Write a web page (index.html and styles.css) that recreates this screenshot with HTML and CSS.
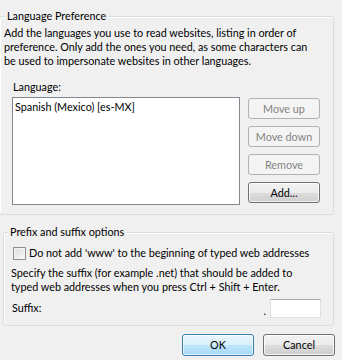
FILE: index.html
```html
<!DOCTYPE html>
<html>
<head>
<meta charset="utf-8">
<link rel="stylesheet" href="styles.css">
</head>
<body>
<div class="dialog">
  <fieldset class="group group-lang">
    <legend class="legend legend-lang">Language Preference</legend>
    <p class="intro">Add the languages you use to read websites, listing in order of preference. Only add the ones you need, as some characters can be used to impersonate websites in other languages.</p>
    <div class="field-label">Language:</div>
    <div class="lang-row">
      <div class="listbox">
        <div class="list-item">Spanish (Mexico) [es-MX]</div>
      </div>
      <div class="side-buttons">
        <button class="btn btn-disabled" disabled>Move up</button>
        <button class="btn btn-disabled" disabled>Move down</button>
        <button class="btn btn-disabled" disabled>Remove</button>
        <button class="btn">Add...</button>
      </div>
    </div>
  </fieldset>
  <fieldset class="group group-prefix">
    <legend class="legend legend-prefix">Prefix and suffix options</legend>
    <label class="check-row"><span class="checkbox"></span><span>Do not add 'www' to the beginning of typed web addresses</span></label>
    <p class="desc">Specify the suffix (for example .net) that should be added to typed web addresses when you press Ctrl + Shift + Enter.</p>
    <div class="suffix-row">
      <span>Suffix:</span>
      <span class="suffix-input-wrap"><span class="dot">.</span><span class="textbox"></span></span>
    </div>
  </fieldset>
  <div class="footer">
    <button class="btn btn-default">OK</button>
    <button class="btn">Cancel</button>
  </div>
</div>
</body>
</html>
```
FILE: styles.css
```css
html, body {
  margin: 0;
  padding: 0;
  background: #f0f0f0;
}
body {
  font-family: Lato, "Open Sans", "DejaVu Sans", sans-serif;
  font-size: 10.8px;
  line-height: 14px;
  color: #000;
  width: 342px;
  height: 360px;
  overflow: hidden;
}
.dialog {
  display: flex;
  flex-direction: column;
}
.group {
  border: 1px solid #d5dfe5;
  border-radius: 3px;
  box-shadow: inset 1px 1px 0 #fff;
  min-width: 0;
}
.legend {
  padding: 0 2px;
  line-height: 14px;
  background: #f0f0f0;
}
.group-lang {
  margin: 9px 8px 0 -1px;
  padding: 3px 12px 9px 4px;
}
.legend-lang {
  margin-left: 1px;
}
.intro {
  margin: 0;
}
.field-label {
  margin: 12px 0 0 9px;
}
.lang-row {
  display: flex;
  margin-top: 3px;
  margin-left: 8px;
}
.listbox {
  width: 226px;
  height: 106px;
  border: 1px solid #828790;
  background: #fff;
}
.list-item {
  padding: 2px 0 0 2px;
}
.side-buttons {
  display: flex;
  flex-direction: column;
  gap: 7px;
  margin-left: 8px;
  margin-top: 1px;
}
.btn {
  width: 72px;
  height: 21px;
  padding: 0;
  font: inherit;
  line-height: 14px;
  color: #000;
  border: 1px solid #707070;
  border-radius: 3px;
  background: linear-gradient(#f2f2f2 0%, #ebebeb 50%, #dddddd 50%, #cfcfcf 100%);
  box-shadow: inset 0 0 0 1px rgba(255,255,255,0.75);
}
.btn-disabled {
  border-color: #adb2b5;
  background: #f4f4f4;
  color: #838383;
  box-shadow: none;
}
.group-prefix {
  margin: 10px 8px 0 3px;
  padding: 7px 12px 7px 7px;
}
.legend-prefix {
  margin-left: -3px;
}
.check-row {
  display: flex;
  align-items: center;
  height: 14px;
  white-space: nowrap;
}
.checkbox {
  flex: none;
  width: 11px;
  height: 11px;
  margin-left: 2px;
  margin-right: 3px;
  border: 1px solid #8e8f8f;
  background: linear-gradient(135deg, #dcdcdc, #fafafa);
  box-shadow: inset 0 0 0 1px #f4f4f4;
}
.desc {
  margin: 6px 0 0 0;
}
.suffix-row {
  display: flex;
  justify-content: space-between;
  align-items: center;
  margin-top: 4px;
  padding-left: 1px;
}
.suffix-input-wrap {
  display: flex;
  align-items: center;
}
.dot {
  margin-right: 4px;
  padding-top: 6px;
}
.textbox {
  width: 49px;
  height: 17px;
  background: #fff;
  border: 1px solid #dbdfe6;
  border-top-color: #abadb3;
}
.footer {
  display: flex;
  justify-content: flex-end;
  gap: 9px;
  margin: 8px 7px 0 0;
}
.footer .btn {
  height: 22px;
}
.btn-default {
  border-color: #3c7fb1;
  background: linear-gradient(#eaf6fd 0%, #d9f0fc 50%, #bee6fd 50%, #a7d9f5 100%);
  box-shadow: inset 0 0 0 1px rgba(255,255,255,0.6);
}
```
